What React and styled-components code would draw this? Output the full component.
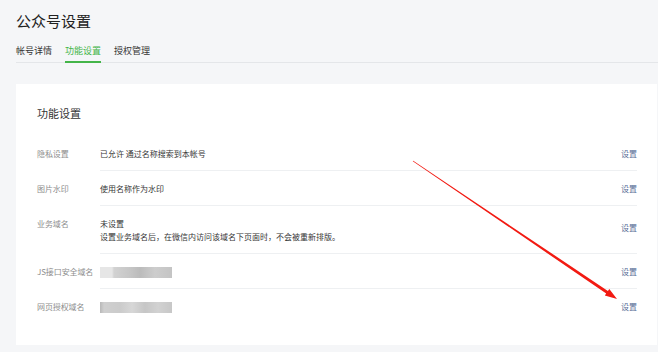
import React from "react";
import styled, { createGlobalStyle } from "styled-components";

const Global = createGlobalStyle`
  html, body { margin: 0; padding: 0; background: #f5f6f8; }
  body { font-family: "Noto Sans CJK SC", "Noto Sans", sans-serif; color: #353535; }
  * { box-sizing: border-box; }
`;

const Page = styled.div`
  position: relative;
  width: 658px;
  height: 352px;
  padding: 11px 1px 0 16px;
  overflow: hidden;
`;

const Title = styled.h1`
  margin: 0;
  font-size: 15px;
  line-height: 20px;
  font-weight: 400;
  color: #222;
`;

const TabBar = styled.nav`
  display: flex;
  gap: 13px;
  margin: 14px -1px 0 0;
  border-bottom: 1px solid #e4e6e9;
`;

const Tab = styled.div`
  width: 36px;
  font-size: 9px;
  line-height: 12px;
  padding-bottom: 4px;
  margin-bottom: -1px;
  white-space: nowrap;
  color: ${(p) => (p.$active ? "#44b549" : "#353535")};
  border-bottom: 2px solid ${(p) => (p.$active ? "#44b549" : "transparent")};
`;

const Card = styled.section`
  margin-top: 21px;
  background: #fff;
  padding: 22px 20px 21px 21px;
`;

const CardTitle = styled.h2`
  margin: 0 0 15px;
  font-size: 11px;
  line-height: 15px;
  font-weight: 400;
  color: #353535;
`;

const Row = styled.div`
  display: flex;
  align-items: stretch;
`;

const Label = styled.div`
  width: 63px;
  flex: none;
  padding-top: 11px;
  font-size: 8px;
  line-height: 13px;
  color: #8d8d8d;
  white-space: nowrap;
  letter-spacing: -0.1px;
`;

const RowBody = styled.div`
  flex: 1;
  display: flex;
  align-items: center;
  padding: 11px 0 10px;
  border-bottom: 1px solid ${(p) => (p.$last ? "transparent" : "#eef0f2")};
`;

const Value = styled.div`
  flex: 1;
  display: flex;
  flex-direction: column;
  align-items: flex-start;
  font-size: 8px;
  line-height: 13px;
  color: #353535;
  white-space: nowrap;
`;

const Line = styled.div``;

const Action = styled.a`
  flex: none;
  font-size: 8px;
  line-height: 13px;
  color: #576b95;
  text-decoration: none;
  margin-top: ${(p) => (p.$raise ? "-6px" : "0")};
`;

const Blur = styled.span`
  display: block;
  margin-top: 1px;
  width: 72px;
  height: 11px;
  filter: blur(0.5px);
  background: ${(p) => p.$bg};
`;

const ArrowLayer = styled.svg`
  position: absolute;
  left: 0;
  top: 0;
  pointer-events: none;
`;

const rows = [
  { label: "隐私设置", lines: ["已允许 通过名称搜索到本帐号"] },
  { label: "图片水印", lines: ["使用名称作为水印"] },
  {
    label: "业务域名",
    lines: ["未设置", "设置业务域名后，在微信内访问该域名下页面时，不会被重新排版。"],
    raise: true,
  },
  {
    label: "JS接口安全域名",
    blur:
      "linear-gradient(90deg, #e6e6e6 0, #e6e6e6 12px, #d2d2d2 14px, #c6c6c6 30px, #bbbbbb 40px, #cdcdcd 55px, #c4c4c4 72px)",
  },
  {
    label: "网页授权域名",
    blur:
      "linear-gradient(90deg, #b8b8b8 0, #cfcfcf 4px, #cbcbcb 20px, #d7d7d7 32px, #c6c6c6 45px, #d2d2d2 58px, #c7c7c7 72px)",
  },
];

export default function App() {
  return (
    <>
      <Global />
      <Page>
        <Title>公众号设置</Title>
        <TabBar>
          <Tab>帐号详情</Tab>
          <Tab $active>功能设置</Tab>
          <Tab>授权管理</Tab>
        </TabBar>
        <Card>
          <CardTitle>功能设置</CardTitle>
          {rows.map((r, i) => (
            <Row key={r.label}>
              <Label>{r.label}</Label>
              <RowBody $last={i === rows.length - 1}>
                <Value>
                  {r.lines
                    ? r.lines.map((l) => <Line key={l}>{l}</Line>)
                    : <Blur $bg={r.blur} />}
                </Value>
                <Action href="#" $raise={r.raise}>设置</Action>
              </RowBody>
            </Row>
          ))}
        </Card>
        <ArrowLayer width="658" height="352" viewBox="0 0 658 352">
          <polygon
            fill="#f21a12"
            points="412.8,161.3 606.2,293.5 604.8,295.6 617,299 609.3,289 607.9,291 413.2,160.7"
          />
        </ArrowLayer>
      </Page>
    </>
  );
}
